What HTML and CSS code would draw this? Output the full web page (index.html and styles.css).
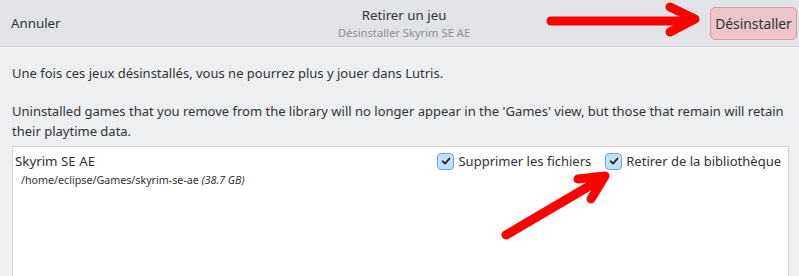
FILE: index.html
```html
<!DOCTYPE html>
<html lang="fr">
<head>
<meta charset="utf-8">
<link rel="stylesheet" href="styles.css">
</head>
<body>
<div class="window">
  <header class="headerbar">
    <div class="hb-left"><span class="cancel">Annuler</span></div>
    <div class="hb-title">
      <div class="title">Retirer un jeu</div>
      <div class="subtitle">Désinstaller Skyrim SE AE</div>
    </div>
    <div class="hb-right"><button class="destructive">Désinstaller</button></div>
  </header>
  <main class="content">
    <p class="msg">Une fois ces jeux désinstallés, vous ne pourrez plus y jouer dans Lutris.</p>
    <p class="msg">Uninstalled games that you remove from the library will no longer appear in the 'Games' view, but those that remain will retain their playtime data.</p>
    <div class="list">
      <div class="row">
        <div class="game">
          <div class="name">Skyrim SE AE</div>
          <div class="path">/home/eclipse/Games/skyrim-se-ae <i>(38.7 GB)</i></div>
        </div>
        <label class="check"><span class="box"><svg viewBox="0 0 16 16" width="16" height="16"><path d="M4 8.2 L6.8 11 L12 5.2" fill="none" stroke="#1d2a33" stroke-width="2" stroke-linecap="round" stroke-linejoin="round"/></svg></span>Supprimer les fichiers</label>
        <label class="check"><span class="box"><svg viewBox="0 0 16 16" width="16" height="16"><path d="M4 8.2 L6.8 11 L12 5.2" fill="none" stroke="#1d2a33" stroke-width="2" stroke-linecap="round" stroke-linejoin="round"/></svg></span>Retirer de la bibliothèque</label>
      </div>
    </div>
  </main>
  <svg class="annot" width="799" height="276" viewBox="0 0 799 276">
    <g fill="none" stroke="#ff0000" stroke-width="9" stroke-linecap="round" stroke-linejoin="round">
      <path d="M551 21 L690 21"/>
      <path d="M670 7 L695 19 L670 32"/>
      <path d="M506 235 L603 178"/>
      <path d="M578 179 L605 176 L591 199"/>
    </g>
  </svg>
</div>
</body>
</html>
```
FILE: styles.css
```css
* { box-sizing: border-box; }
html, body { margin: 0; padding: 0; }
body {
  font-family: "Noto Sans", "Open Sans", sans-serif;
  color: #2e3436;
  background: #eeeff1;
  width: 799px;
  height: 276px;
  overflow: hidden;
}
.window { position: relative; width: 799px; height: 276px; }
.headerbar {
  display: flex;
  align-items: center;
  height: 47px;
  background: #e2e3e6;
  border-bottom: 1px solid #d3d4d7;
  padding: 0 2px 0 11px;
}
.hb-left, .hb-right { flex: 1; display: flex; }
.hb-right { justify-content: flex-end; }
.cancel { font-size: 13.3px; }
.hb-title { text-align: center; line-height: 1.2; padding-top: 1px; }
.title { font-size: 13.3px; }
.subtitle { font-size: 11.2px; color: #8d9091; margin-top: 2px; }
.destructive {
  font-family: inherit;
  font-size: 13.8px;
  color: #2e3436;
  background: #ebc5c9;
  border: 1px solid #d9999f;
  border-radius: 5px;
  height: 33px;
  width: 87px;
  padding: 0;
  margin-top: 0;
}
.content { padding: 16px 10px 0 12px; }
.msg { margin: 0 0 18px; font-size: 13px; line-height: 20px; }
.msg + .msg { margin-bottom: 5px; }
.list {
  background: #fff;
  border: 1px solid #d3d4d6;
  height: 140px;
  padding: 4px 7px 0 2px;
}
.row { display: flex; align-items: flex-start; gap: 14px; }
.game { flex: 1; }
.name { font-size: 13.3px; line-height: 20px; }
.path { font-size: 10.7px; padding-left: 6px; margin-top: 2px; }
.check { display: flex; align-items: center; gap: 4px; font-size: 13px; line-height: 20px; }
.box {
  width: 17px; height: 17px;
  border: 1px solid #62abe0;
  background: #c3e1f6;
  border-radius: 4px;
  display: flex; align-items: center; justify-content: center;
}
.box svg { width: 14px; height: 14px; }
.annot { position: absolute; left: 0; top: 0; pointer-events: none; }
```
